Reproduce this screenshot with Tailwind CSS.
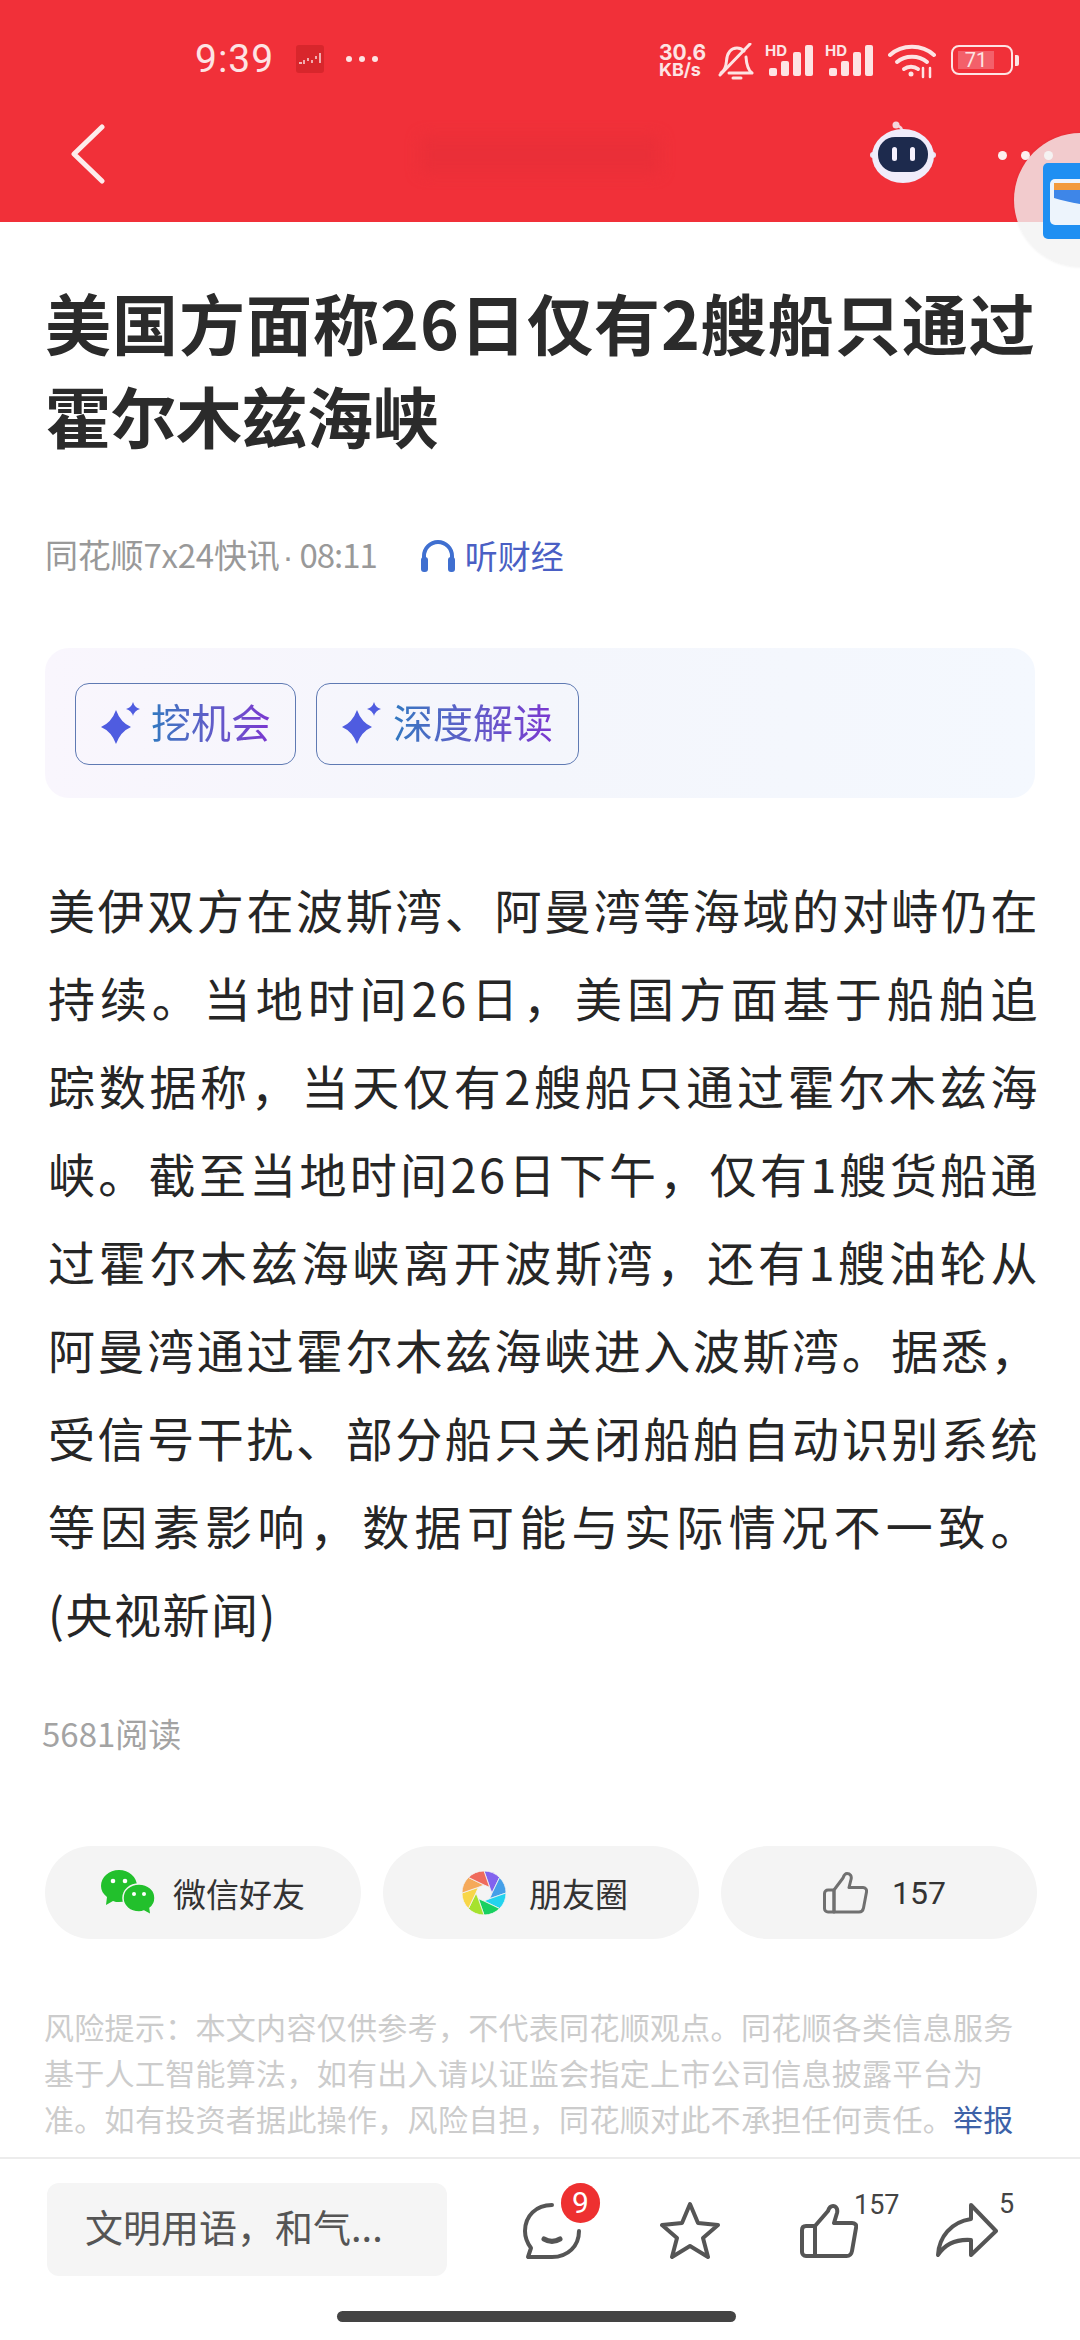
<!DOCTYPE html>
<html lang="zh-CN">
<head>
    <meta charset="UTF-8">
    <meta name="viewport" content="width=device-width, initial-scale=1.0">
    <title>美国方面称26日仅有2艘船只通过霍尔木兹海峡</title>
    <script src="https://cdn.jsdelivr.net/npm/@tailwindcss/browser@4"></script>
</head>
<body class="bg-white">
<div class="relative w-[1080px] h-[2340px] overflow-hidden bg-white font-['Noto_Sans_CJK_SC','Noto_Sans',sans-serif]">

    <!-- Red header -->
    <header class="h-[222px] bg-[#f13039]">
        <!-- Status bar -->
        <div class="h-[118px] flex items-start justify-between pt-[43px] pl-[195px] pr-[61px] text-[#fde4e4]">
            <div class="flex items-center h-[32px]">
                <span class="text-[39px] leading-[32px] font-['Roboto'] tracking-[1px]">9:39</span>
                <span class="ml-[22px] w-[28px] h-[28px] rounded-[3px] bg-[#d8262c] flex items-center justify-center">
                    <svg width="26" height="14" viewBox="0 0 26 14" fill="none" stroke="#fde4e4" stroke-width="1.4"><path d="M2 11h3M7 8v4M11 6v3M15 8v3M19 4v3M23 1v10"/></svg>
                </span>
                <span class="ml-[22px] flex gap-[7px]">
                    <i class="w-[6px] h-[6px] rounded-full bg-[#fde4e4]"></i>
                    <i class="w-[6px] h-[6px] rounded-full bg-[#fde4e4]"></i>
                    <i class="w-[6px] h-[6px] rounded-full bg-[#fde4e4]"></i>
                </span>
            </div>
            <div class="flex items-start">
                <div class="w-[50px] font-bold font-['Inter']"><div class="text-[21px] leading-[19px]">30.6</div><div class="text-[18px] leading-[16px]">KB/s</div></div>
                <svg class="ml-[9px]" width="36" height="38" viewBox="0 0 36 38" fill="none" stroke="#fde4e4" stroke-width="3" stroke-linecap="round" stroke-linejoin="round"><path d="M3 30c4-3 5-6 5.500-12C9 10 13 5 19 5c3 0 5 1 7 3"/><path d="M28 14c.5 8 2 13 6 16H11"/><path d="M2 32L32 1"/><path d="M15 35h8"/></svg>
                <div class="ml-[11px] relative w-[50px] h-[33px]">
                    <span class="absolute left-0 top-0 text-[15px] leading-[15px] font-bold font-['Inter']">HD</span>
                    <div class="absolute left-[4px] bottom-0 flex items-end gap-[4px]">
                        <i class="w-[8px] h-[8px] rounded-[2px] bg-[#fde4e4]"></i><i class="w-[8px] h-[15px] rounded-[2px] bg-[#fde4e4]"></i><i class="w-[8px] h-[24px] rounded-[2px] bg-[#fde4e4]"></i><i class="w-[8px] h-[31px] rounded-[2px] bg-[#fde4e4]"></i>
                    </div>
                </div>
                <div class="ml-[10px] relative w-[50px] h-[33px]">
                    <span class="absolute left-0 top-0 text-[15px] leading-[15px] font-bold font-['Inter']">HD</span>
                    <div class="absolute left-[4px] bottom-0 flex items-end gap-[4px]">
                        <i class="w-[8px] h-[8px] rounded-[2px] bg-[#fde4e4]"></i><i class="w-[8px] h-[15px] rounded-[2px] bg-[#fde4e4]"></i><i class="w-[8px] h-[24px] rounded-[2px] bg-[#fde4e4]"></i><i class="w-[8px] h-[31px] rounded-[2px] bg-[#fde4e4]"></i>
                    </div>
                </div>
                <svg class="ml-[13px]" width="48" height="36" viewBox="0 0 48 36" fill="none" stroke="#fde4e4" stroke-width="4" stroke-linecap="round"><path d="M2 12c12-11 32-11 44 0"/><path d="M9 19c8-7 22-7 30 0"/><path d="M16 26c4-3 10-3 14 0"/><circle cx="23" cy="31" r="2.500" fill="#fde4e4" stroke="none"/><path d="M35 25v9M42 25v9" stroke-width="2.500"/></svg>
                <div class="ml-[15px] mt-[2px] flex items-center">
                    <div class="relative w-[62px] h-[30px] rounded-[8px] border-[2px] border-[#fde4e4] overflow-hidden flex items-center">
                        <div class="absolute left-[5px] top-[4px] bottom-[4px] w-[36px] bg-[#f3606a]"></div>
                        <span class="relative w-[46px] text-center text-[20px] leading-[20px] font-['Roboto']">71</span>
                    </div>
                    <i class="ml-[2px] w-[4px] h-[11px] rounded-r-[2px] bg-[#fde4e4]"></i>
                </div>
            </div>
        </div>
        <!-- Nav bar -->
        <nav class="relative h-[104px] flex items-start pl-[71px]">
            <svg class="mt-[6px]" width="34" height="60" viewBox="0 0 34 60" fill="none" stroke="#fdecec" stroke-width="5" stroke-linecap="round" stroke-linejoin="round"><path d="M31 3L3 30l28 27"/></svg>
            <div class="ml-[315px] mt-[18px] w-[240px] h-[38px] bg-[#ea2f38] blur-[7px] rounded-[6px]"></div>
            <svg class="ml-[210px] mt-[3px]" width="66" height="62" viewBox="0 0 66 62">
                <path d="M32 10c0-5-3-4-5-6" fill="none" stroke="#f4d6de" stroke-width="2.500"/>
                <circle cx="26" cy="4" r="3.500" fill="#f4d6de"/>
                <circle cx="3" cy="34" r="3" fill="#e8e4f4"/><circle cx="63" cy="34" r="3" fill="#e8e4f4"/>
                <ellipse cx="33" cy="35" rx="31" ry="27" fill="#f0ecfa"/>
                <rect x="8" y="16" width="50" height="35" rx="17" fill="#1d2a4d"/>
                <rect x="22" y="26" width="5" height="14" rx="2.500" fill="#f6f2ff"/><rect x="40" y="26" width="5" height="14" rx="2.500" fill="#f6f2ff"/>
            </svg>
            <span class="ml-[62px] mt-[33px] flex gap-[14px]">
                <i class="w-[9px] h-[9px] rounded-full bg-[#fdf0f0]"></i>
                <i class="w-[9px] h-[9px] rounded-full bg-[#fdf0f0]"></i>
                <i class="w-[9px] h-[9px] rounded-full bg-[#fdf0f0]"></i>
            </span>
        </nav>
    </header>

    <!-- Floating wallet bubble -->
    <div class="absolute left-[1014px] top-[133px] w-[134px] h-[134px] rounded-full bg-[#f2f2f2]/80 shadow-[0_0_3px_rgba(0,0,0,0.08)] pl-[29px] pt-[30px]">
        <svg width="60" height="76" viewBox="0 0 60 76">
            <rect x="0" y="0" width="60" height="76" rx="5" fill="#1f8ff2"/>
            <rect x="7" y="16" width="53" height="46" rx="5" fill="#edf4fc"/>
            <rect x="11" y="20" width="49" height="7" fill="#f29a3d"/>
            <path d="M11 27h49v16c-18 0-35-4-49-8z" fill="#3e86e8"/>
        </svg>
    </div>

    <main class="px-[45px]">
        <h1 class="mt-[53px] text-[66px] leading-[93px] tracking-[1px] font-bold text-[#2b2b2b] whitespace-nowrap">美国方面称26日仅有2艘船只通过<br><span class="tracking-[-0.5px]">霍尔木兹海峡</span></h1>

        <div class="mt-[72px] flex items-center h-[44px] text-[33px] leading-[44px]">
            <span class="text-[#999999] tracking-[-0.2px]">同花顺7x24快讯<span class="ml-[3px] mr-[6px] font-['Liberation_Sans']">·</span><span class="tracking-[-1px]">08:11</span></span>
            <svg class="ml-[44px]" width="34" height="33" viewBox="0 0 34 33" fill="none"><path d="M3 27V17a14 14 0 0 1 28 0v10" stroke="#3f6fd0" stroke-width="4"/><rect x="0" y="18" width="7" height="15" rx="3" fill="#3f6fd0"/><rect x="27" y="18" width="7" height="15" rx="3" fill="#3f6fd0"/></svg>
            <span class="ml-[10px] text-[#4a5fc4]">听财经</span>
        </div>

        <section class="mt-[71px] h-[150px] rounded-[24px] bg-linear-to-r from-[#f9f6fd] via-[#f4f6fc] to-[#f4f8fe] pl-[30px] pt-[35px] flex gap-[20px] items-start">
            <a class="h-[82px] w-[221px] rounded-[14px] border border-[#5f7ab3] flex items-center pl-[25px]">
                <svg class="-mt-[2px]" width="40" height="42" viewBox="0 0 40 42" fill="#4f5ce0"><path d="M15 8Q19.500 20.500 30 25Q19.500 29.500 15 42Q10.500 29.500 0 25Q10.500 20.500 15 8Z"/><path d="M32 0Q33.500 5.500 39 7Q33.500 8.500 32 14Q30.500 8.500 25 7Q30.500 5.500 32 0Z"/></svg>
                <span class="ml-[10px] -mt-[7px] text-[40px] leading-[50px] bg-linear-to-r from-[#2f78c0] to-[#7a36d0] bg-clip-text text-transparent">挖机会</span>
            </a>
            <a class="h-[82px] w-[263px] rounded-[14px] border border-[#5f7ab3] flex items-center pl-[25px]">
                <svg class="-mt-[2px]" width="40" height="42" viewBox="0 0 40 42" fill="#4f5ce0"><path d="M15 8Q19.500 20.500 30 25Q19.500 29.500 15 42Q10.500 29.500 0 25Q10.500 20.500 15 8Z"/><path d="M32 0Q33.500 5.500 39 7Q33.500 8.500 32 14Q30.500 8.500 25 7Q30.500 5.500 32 0Z"/></svg>
                <span class="ml-[11px] -mt-[7px] text-[40px] leading-[50px] bg-linear-to-r from-[#2f78c0] to-[#7a36d0] bg-clip-text text-transparent">深度解读</span>
            </a>
        </section>

        <article class="mt-[67px] ml-[3px] w-[992px] text-[47px] leading-[88px] tracking-[2.5px] text-[#262626]">
            <div class="text-justify [text-align-last:justify]">
                美伊双方在波斯湾、阿曼湾等海域的对峙仍在<br>
                持续。当地时间26日，美国方面基于船舶追<br>
                踪数据称，当天仅有2艘船只通过霍尔木兹海<br>
                峡。截至当地时间26日下午，仅有1艘货船通<br>
                过霍尔木兹海峡离开波斯湾，还有1艘油轮从<br>
                阿曼湾通过霍尔木兹海峡进入波斯湾。据悉，<br>
                受信号干扰、部分船只关闭船舶自动识别系统<br>
                等因素影响，数据可能与实际情况不一致。
            </div>
            <div class="tracking-[1.5px]">(央视新闻)</div>
        </article>

        <p class="mt-[54px] -ml-[3px] text-[33px] leading-[44px] text-[#a3a3a3]">5681阅读</p>

        <div class="mt-[91px] w-[992px] flex justify-between">
            <a class="w-[316px] h-[93px] rounded-full bg-[#f4f4f4] flex items-center pl-[56px]">
                <svg width="54" height="46" viewBox="0 0 54 46">
                    <path d="M18 0c10 0 18 7 18 16s-8 16-18 16c-2 0-4 0-6-1l-7 4 1-8C2 24 0 20 0 16 0 7 8 0 18 0z" fill="#22c02c"/>
                    <circle cx="12" cy="11" r="2.300" fill="#fff"/><circle cx="24" cy="11" r="2.300" fill="#fff"/>
                    <path d="M38 14c9 0 16 6 16 14 0 4-2 8-5 10l1 7-7-4c-2 1-3 1-5 1-9 0-16-6-16-14s7-14 16-14z" fill="#22c02c" stroke="#f4f4f4" stroke-width="1.500"/>
                    <circle cx="33" cy="24" r="2" fill="#fff"/><circle cx="43" cy="24" r="2" fill="#fff"/>
                </svg>
                <span class="ml-[18px] text-[33px] leading-[44px] text-[#333333]">微信好友</span>
            </a>
            <a class="w-[316px] h-[93px] rounded-full bg-[#f4f4f4] flex items-center pl-[78px]">
                <svg width="46" height="46" viewBox="0 0 46 46" stroke="#f4f4f4" stroke-width="0.800">
                    <path d="M23 1A22 22 0 0 1 38.600 7.400L31 23 28.700 17.300Z" fill="#8263ee"/>
                    <path d="M23 1A22 22 0 0 1 38.600 7.400L31 23 28.700 17.300Z" fill="#459fe8" transform="rotate(45 23 23)"/>
                    <path d="M23 1A22 22 0 0 1 38.600 7.400L31 23 28.700 17.300Z" fill="#23d3ee" transform="rotate(90 23 23)"/>
                    <path d="M23 1A22 22 0 0 1 38.600 7.400L31 23 28.700 17.300Z" fill="#18d060" transform="rotate(135 23 23)"/>
                    <path d="M23 1A22 22 0 0 1 38.600 7.400L31 23 28.700 17.300Z" fill="#a6e22e" transform="rotate(180 23 23)"/>
                    <path d="M23 1A22 22 0 0 1 38.600 7.400L31 23 28.700 17.300Z" fill="#f8d648" transform="rotate(225 23 23)"/>
                    <path d="M23 1A22 22 0 0 1 38.600 7.400L31 23 28.700 17.300Z" fill="#f5a95a" transform="rotate(270 23 23)"/>
                    <path d="M23 1A22 22 0 0 1 38.600 7.400L31 23 28.700 17.300Z" fill="#ef6a5c" transform="rotate(315 23 23)"/>
                </svg>
                <span class="ml-[22px] text-[33px] leading-[44px] text-[#333333]">朋友圈</span>
            </a>
            <a class="w-[316px] h-[93px] rounded-full bg-[#f4f4f4] flex items-center pl-[102px]">
                <svg width="45" height="42" viewBox="0 0 45 42" fill="none" stroke="#707070" stroke-width="3" stroke-linejoin="round" stroke-linecap="round"><path d="M11 18L20 6c1-3 2-4.500 4-4.500 3 0 5 2.500 4 6l-2 8h14c2.500 0 4 2 3.500 4.500l-3 16c-.5 2.500-2 4-4.500 4H11z"/><path d="M11 18H5c-2 0-3.500 1.500-3.500 3.500v15C1.500 38.500 3 40 5 40h6z"/></svg>
                <span class="ml-[24px] text-[32px] leading-[44px] text-[#333333] font-['Roboto']">157</span>
            </a>
        </div>

        <p class="mt-[64px] -ml-[1px] w-[1000px] text-[30px] leading-[46px] tracking-[0.3px] text-[#cccccc] whitespace-nowrap">
            风险提示：本文内容仅供参考，不代表同花顺观点。同花顺各类信息服务<br>
            基于人工智能算法，如有出入请以证监会指定上市公司信息披露平台为<br>
            准。如有投资者据此操作，风险自担，同花顺对此不承担任何责任。<span class="text-[#3d62a8]">举报</span>
        </p>
    </main>

    <!-- Bottom bar -->
    <footer class="absolute left-0 right-0 bottom-0 h-[183px] border-t-2 border-[#ececec] bg-white">
        <div class="flex items-start pl-[47px] pt-[24px]">
            <div class="w-[400px] h-[93px] rounded-[12px] bg-[#f5f5f5] flex items-center pl-[38px] pb-[8px] text-[38px] text-[#555555]">文明用语，和气...</div>
            <div class="relative ml-[76px] mt-[20px] w-[58px] h-[56px]">
                <svg width="58" height="56" viewBox="0 0 58 56" fill="none" stroke="#555555" stroke-width="4" stroke-linecap="round" stroke-linejoin="round"><path d="M29 2C13 2 2 13 2 28c0 7 3 13 6 17l-3 9h24c16 0 27-11 27-26"/><path d="M21 36c5 3 11 3 16 0" stroke-width="5"/></svg>
                <span class="absolute left-[38px] -top-[20px] w-[39px] h-[40px] rounded-full bg-[#ee3030] text-white text-[30px] leading-[40px] text-center font-['Roboto']">9</span>
            </div>
            <svg class="ml-[79px] mt-[18px]" width="60" height="58" viewBox="0 0 60 58" fill="none" stroke="#555555" stroke-width="4" stroke-linejoin="round"><path d="M30 3l8 19 20 2-15 13 5 19-18-11-18 11 5-19L2 24l20-2z"/></svg>
            <div class="relative ml-[80px] mt-[21px] w-[58px] h-[54px]">
                <svg width="58" height="54" viewBox="0 0 58 54" fill="none" stroke="#555555" stroke-width="4" stroke-linejoin="round" stroke-linecap="round"><path d="M15 22L28 7c1-3 3-5 5-5 3 0 5 3 4 7l-3 10h18c3 0 5 2 4 5l-4 23c-.5 3-2.500 5-5.500 5H15z"/><path d="M15 22H6c-2.500 0-4 1.500-4 4v22c0 2 1.500 4 4 4h9z"/></svg>
                <span class="absolute left-[54px] -top-[13px] text-[27px] leading-[28px] text-[#444444] font-['Roboto']">157</span>
            </div>
            <div class="relative ml-[78px] mt-[20px] w-[62px] h-[54px]">
                <svg width="62" height="54" viewBox="0 0 62 54" fill="none" stroke="#555555" stroke-width="4" stroke-linejoin="round"><path d="M35 2l25 26-25 24V37C20 36 9 41 2 52c1-18 13-33 33-36z"/></svg>
                <span class="absolute left-[63px] -top-[13px] text-[27px] leading-[28px] text-[#444444] font-['Roboto']">5</span>
            </div>
        </div>
        <div class="absolute left-[337px] top-[152px] w-[399px] h-[11px] rounded-full bg-[#444444]"></div>
    </footer>
</div>
</body>
</html>
